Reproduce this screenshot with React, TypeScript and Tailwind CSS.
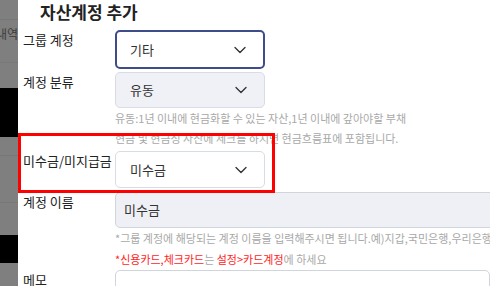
import React from 'react';
import { ChevronDown } from 'lucide-react';

const font = "font-['Noto_Sans_CJK_KR','Noto_Sans',sans-serif]";

const Select: React.FC<{ value: string; focused?: boolean; filled?: boolean; className?: string }> = ({
  value,
  focused,
  filled,
  className = '',
}) => (
  <div
    className={`flex items-center justify-between w-[150px] rounded-[5px] pr-[13px] text-[13px] text-[#333] ${
      focused
        ? 'border-2 border-[#3f4c8a] bg-white pl-[13px]'
        : filled
          ? 'border border-[#d8dce4] bg-[#eff1f6] pl-[14px]'
          : 'border border-[#d8dce4] bg-white pl-[14px]'
    } ${className}`}
  >
    <span>{value}</span>
    <ChevronDown size={20} strokeWidth={1.6} className="text-[#333]" />
  </div>
);

const Label: React.FC<{ children: React.ReactNode }> = ({ children }) => (
  <div className="w-[92px] shrink-0 text-[13px] leading-[20px] text-[#222] whitespace-nowrap">{children}</div>
);

export default function App() {
  return (
    <div className={`w-[490px] h-[286px] overflow-hidden flex bg-white ${font}`}>
      {/* page behind the modal */}
      <div className="w-[18px] shrink-0 flex flex-col bg-[#7f7f7f]">
        <div className="h-[20px] border-b border-[#777]" />
        <div className="h-[43px] border-b border-[#787878] flex justify-end pt-[5px] overflow-hidden whitespace-nowrap text-[12px] text-[#3c3c3c]">
          내역
        </div>
        <div className="h-[25px]" />
        <div className="h-[49px] bg-black" />
        <div className="h-[19px] border-b border-[#777]" />
        <div className="h-[47px] border-b border-[#777]" />
        <div className="h-[32px]" />
        <div className="h-[28px] bg-black" />
        <div className="flex-1" />
      </div>

      {/* modal */}
      <div className="relative flex-1 min-w-0 pl-[5px]">
        <h2 className="h-[28px] pl-[17px] text-[17px] leading-[24px] font-bold text-[#222] whitespace-nowrap">자산계정 추가</h2>

        <div className="flex mt-[2px]">
          <Label>그룹 계정</Label>
          <Select value="기타" focused className="h-[39px]" />
        </div>

        <div className="flex mt-[3px]">
          <Label>계정 분류</Label>
          <div>
            <Select value="유동" filled className="h-[36px]" />
            <div className="text-[11px] leading-[20px] text-[#a8a8a8] whitespace-nowrap">
              <p>유동:1년 이내에 현금화할 수 있는 자산,1년 이내에 갚아야할 부채</p>
              <p>현금 및 현금성 자산에 체크를 하시면 현금흐름표에 포함됩니다.</p>
            </div>
          </div>
        </div>

        <div className="flex mt-[3px]">
          <Label>미수금/미지급금</Label>
          <Select value="미수금" className="h-[37px]" />
        </div>

        <div className="flex mt-[4px]">
          <Label>계정 이름</Label>
          <div>
            <div className="w-[400px] h-[36px] flex items-center pl-[8px] border border-[#d0d4db] rounded-[5px] bg-[#eef0f5] text-[13px] text-[#333]">
              미수금
            </div>
            <div className="text-[11px] leading-[21px] text-[#a8a8a8] whitespace-nowrap">
              <p>*그룹 계정에 해당되는 계정 이름을 입력해주시면 됩니다.예)지갑,국민은행,우리은행</p>
              <p>
                <span className="text-[#ff2323]">*신용카드,체크카드</span>는{' '}
                <span className="text-[#ff2323]">설정&gt;카드계정</span>에 하세요
              </p>
            </div>
          </div>
        </div>

        <div className="flex">
          <Label>메모</Label>
          <div className="w-[400px] h-[60px] border border-[#d0d4db] rounded-[5px] bg-white" />
        </div>

        {/* annotation box */}
        <div className="absolute left-0 top-[133px] w-[257px] h-[60px] border-[3px] border-[#ff0000] pointer-events-none" />
      </div>
    </div>
  );
}
